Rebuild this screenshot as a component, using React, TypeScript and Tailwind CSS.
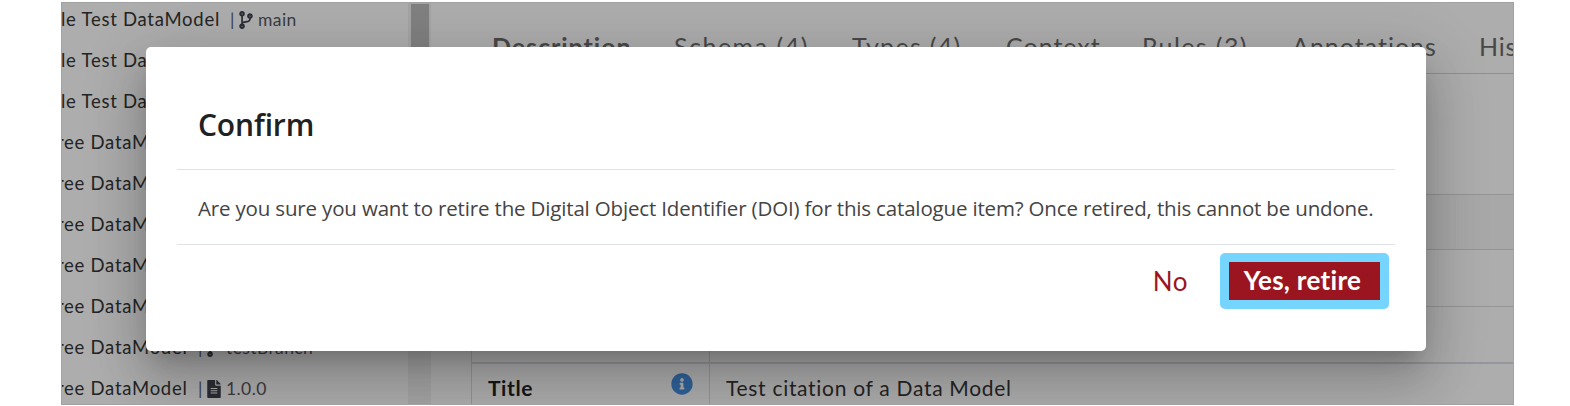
import type { ReactNode } from "react";
import { FaCodeBranch, FaFileAlt, FaInfoCircle } from "react-icons/fa";

function TreeRow({ lead, children }: { lead: "le" | "ree"; children?: ReactNode }) {
  return (
    <div className="flex h-[41px] items-center whitespace-nowrap text-[18.5px] leading-[41px] tracking-[0.73px] text-[#242424]">
      <span className={lead === "le" ? "w-[166px] -ml-px" : "w-[138px] -ml-[5px]"}>{lead} {lead === "le" ? "Test " : ""}DataModel</span>
      {children}
    </div>
  );
}

function Version({ kind, text }: { kind: "branch" | "file"; text: string }) {
  return (
    <span className="flex items-center text-[17.5px] tracking-[0.4px] text-[#3b3b3f]">
      <span className="w-[11px] pl-[3px]">|</span>
      {kind === "branch" ? (
        <FaCodeBranch className="mr-[4px] h-[18px] w-[16px] text-[#2a2d34]" />
      ) : (
        <FaFileAlt className="mr-[4px] h-[18px] w-[16px] text-[#2a2d34]" />
      )}
      <span>{text}</span>
    </span>
  );
}

export default function App() {
  return (
    <div className="h-[406px] w-[1570px] overflow-hidden bg-white pl-[61px] pt-[2px] font-['Lato',sans-serif]">
      <div className="relative flex h-[403px] w-[1453px] overflow-hidden border border-[#a2a2a2] bg-[#adadad]">
        <aside className="h-full w-[346px] shrink-0 overflow-hidden">
          <div className="-mt-[4px]">
            <TreeRow lead="le"><Version kind="branch" text="main" /></TreeRow>
            <TreeRow lead="le" />
            <TreeRow lead="le" />
            <TreeRow lead="ree" />
            <TreeRow lead="ree" />
            <TreeRow lead="ree" />
            <TreeRow lead="ree" />
            <TreeRow lead="ree" />
            <TreeRow lead="ree"><Version kind="branch" text="testBranch" /></TreeRow>
            <TreeRow lead="ree"><Version kind="file" text="1.0.0" /></TreeRow>
          </div>
        </aside>
        <div className="flex h-full w-[23px] shrink-0 justify-center bg-[#a4a4a4]">
          <div className="mt-px h-[160px] w-[18px] bg-[#808080]" />
        </div>
        <main className="flex min-w-0 flex-1 flex-col overflow-hidden pl-[40px]">
          <nav className="flex h-[71px] shrink-0 items-start whitespace-nowrap border-b border-[#8f8f8f] pl-[21px] pt-[25px] text-[25px] leading-[36px] text-[#484848]">
            <span className="w-[182px] shrink-0 font-bold tracking-[0.95px]">Description</span>
            <span className="w-[178px] shrink-0 tracking-[1.5px]">Schema (4)</span>
            <span className="w-[154px] shrink-0 tracking-[1.3px]">Types (4)</span>
            <span className="w-[136px] shrink-0 tracking-[1px]">Context</span>
            <span className="w-[150px] shrink-0 tracking-[1.4px]">Rules (3)</span>
            <span className="w-[187px] shrink-0 tracking-[1px]">Annotations</span>
            <span className="tracking-[0.8px]">History</span>
          </nav>
          <div className="h-[120px] shrink-0" />
          <div className="h-[55px] shrink-0 border-t border-[#949494] bg-[#a8a8a8]" />
          <div className="h-[57px] shrink-0 border-t border-[#949494]" />
          <div className="flex h-[56px] shrink-0 border-l border-t border-[#949596]">
            <div className="w-[238px] border-r border-[#949596]" />
          </div>
          <div className="flex h-[60px] shrink-0 border-l border-t-2 border-l-[#949596] border-t-[#94979b] text-[21px] leading-[30px]">
            <div className="flex w-[238px] shrink-0 justify-between border-r border-[#949596] px-[16px] pt-[9px]">
              <span className="font-bold tracking-[0.6px] text-[#161616]">Title</span>
              <FaInfoCircle className="h-[22px] w-[22px] text-[#2f6299]" />
            </div>
            <span className="pl-[16px] pt-[9px] tracking-[0.7px] text-[#242424]">Test citation of a Data Model</span>
          </div>
        </main>

        <div
          role="dialog"
          className="absolute left-[84px] top-[44px] h-[304px] w-[1280px] rounded-[5px] bg-white px-[31px] shadow-[0_14px_20px_-9px_rgba(0,0,0,0.2),0_31px_49px_4px_rgba(0,0,0,0.14),0_12px_60px_10px_rgba(0,0,0,0.12)]"
        >
          <h2 className="h-[123px] border-b border-[#dfe3e7] pl-[21px] pt-[58px] font-['Open_Sans',sans-serif] text-[30px] font-semibold leading-[40px] tracking-[-0.15px] text-[#212121]">
            Confirm
          </h2>
          <p className="h-[75px] whitespace-nowrap border-b border-[#dfe3e7] pl-[21px] pt-[23px] font-['Open_Sans',sans-serif] text-[20.5px] leading-[30px] tracking-[-0.165px] text-[#444]">
            Are you sure you want to retire the Digital Object Identifier (DOI) for this catalogue item? Once retired, this cannot be undone.
          </p>
          <div className="flex items-center justify-end pr-[6.5px] pt-[8px] text-[26px]">
            <button className="mr-[31.5px] tracking-[0.5px] text-[#9b1521]">No</button>
            <div className="rounded-[5px] bg-[#75d5ff] p-[9px]">
              <button className="flex h-[38px] w-[151px] items-center justify-center bg-[#9b1521] pb-[2px] pr-[3px] font-bold tracking-[0.3px] text-white">
                Yes, retire
              </button>
            </div>
          </div>
        </div>
      </div>
    </div>
  );
}
